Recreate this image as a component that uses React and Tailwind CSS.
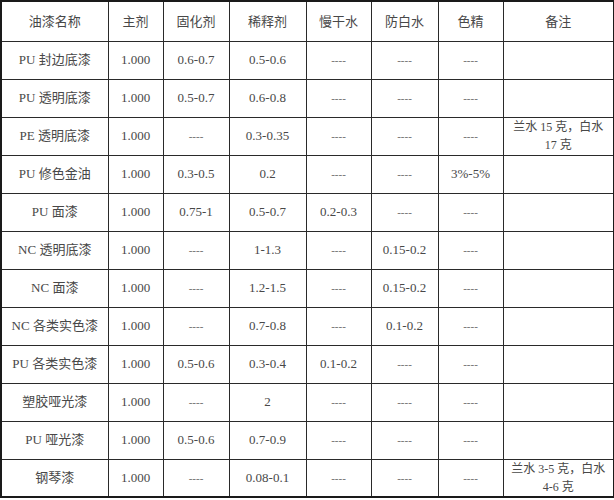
const headers = ['油漆名称', '主剂', '固化剂', '稀释剂', '慢干水', '防白水', '色精', '备注'];

const widths = ['w-[107px]', 'w-[55px]', 'w-[66px]', 'w-[77px]', 'w-[65px]', 'w-[67px]', 'w-[65px]', 'w-[111px]'];

const D = '----';

const rows = [
  ['PU 封边底漆', '1.000', '0.6-0.7', '0.5-0.6', D, D, D, null],
  ['PU 透明底漆', '1.000', '0.5-0.7', '0.6-0.8', D, D, D, null],
  ['PE 透明底漆', '1.000', D, '0.3-0.35', D, D, D, ['兰水 15 克，白水', '17 克']],
  ['PU 修色金油', '1.000', '0.3-0.5', '0.2', D, D, '3%-5%', null],
  ['PU 面漆', '1.000', '0.75-1', '0.5-0.7', '0.2-0.3', D, D, null],
  ['NC 透明底漆', '1.000', D, '1-1.3', D, '0.15-0.2', D, null],
  ['NC 面漆', '1.000', D, '1.2-1.5', D, '0.15-0.2', D, null],
  ['NC 各类实色漆', '1.000', D, '0.7-0.8', D, '0.1-0.2', D, null],
  ['PU 各类实色漆', '1.000', '0.5-0.6', '0.3-0.4', '0.1-0.2', D, D, null],
  ['塑胶哑光漆', '1.000', D, '2', D, D, D, null],
  ['PU 哑光漆', '1.000', '0.5-0.6', '0.7-0.9', D, D, D, null],
  ['钢琴漆', '1.000', D, '0.08-0.1', D, D, D, ['兰水 3-5 克，白水', '4-6 克']],
];

function Cell({ value }) {
  if (value === null) return <td className="border border-[#2a2a2a]" />;
  if (Array.isArray(value)) {
    return (
      <td className="border border-[#2a2a2a] text-center text-[12px] leading-[18px]">
        {value[0]}
        <br />
        {value[1]}
      </td>
    );
  }
  const dash = value === D;
  return (
    <td className={`border border-[#2a2a2a] text-center ${dash ? 'text-[11px] text-[#666]' : ''}`}>
      {value}
    </td>
  );
}

export default function App() {
  return (
    <div
      className="w-[614px] h-[500px] bg-white text-[#484848] text-[13px]"
      style={{ fontFamily: '"Liberation Serif", "Noto Sans CJK SC", serif' }}
    >
      <table className="table-fixed border-collapse border-2 border-[#1a1a1a] w-[613px]">
        <colgroup>
          {widths.map((w, i) => (
            <col key={i} className={w} />
          ))}
        </colgroup>
        <thead>
          <tr className="h-[40px]">
            {headers.map(h => (
              <th key={h} className="border border-[#2a2a2a] font-normal text-center">
                {h}
              </th>
            ))}
          </tr>
        </thead>
        <tbody>
          {rows.map((r, i) => (
            <tr key={i} className="h-[38px]">
              {r.map((v, j) => (
                <Cell key={j} value={v} />
              ))}
            </tr>
          ))}
        </tbody>
      </table>
    </div>
  );
}
